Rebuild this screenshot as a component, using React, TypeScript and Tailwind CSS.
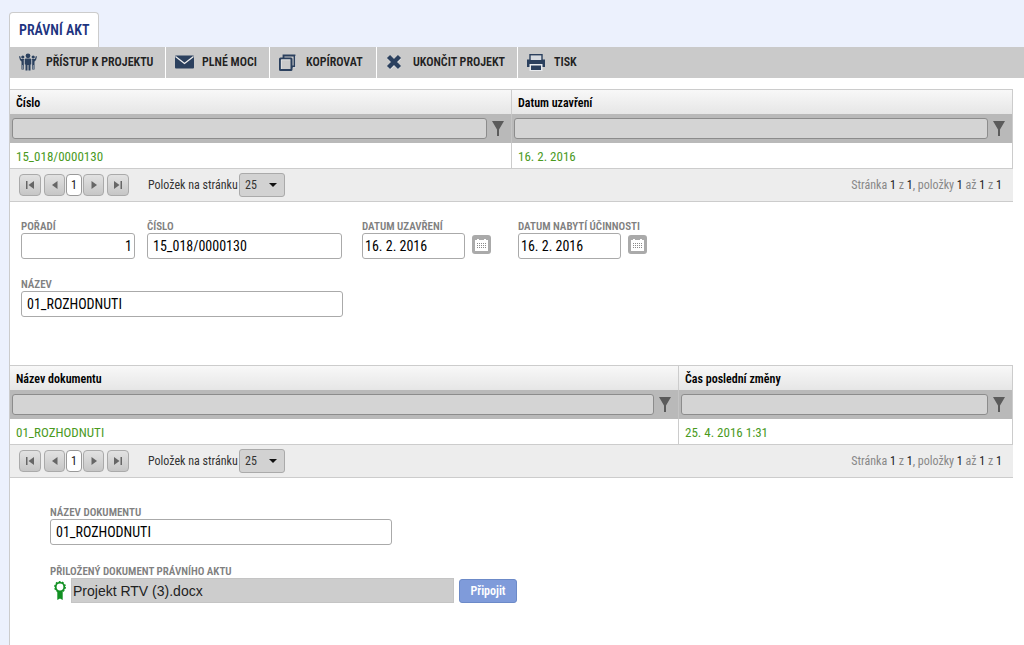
import { useState } from 'react'
import type { ReactNode } from 'react'

interface Column {
  title: string
  width: string
  value: string
}

const DOCUMENT_COLUMNS: Column[] = [
  { title: 'Název dokumentu', width: 'w-2/3', value: '01_ROZHODNUTI' },
  { title: 'Čas poslední změny', width: 'w-1/3', value: '25. 4. 2016 1:31' },
]

const ACT_COLUMNS: Column[] = [
  { title: 'Číslo', width: 'w-1/2', value: '15_018/0000130' },
  { title: 'Datum uzavření', width: 'w-1/2', value: '16. 2. 2016' },
]

function PeopleIcon() {
  return (
    <svg viewBox="0 0 18 18" className="w-[18px] h-[18px]" fill="#2b405e">
      <circle cx="9" cy="2.8" r="2.4" />
      <circle cx="3.8" cy="4" r="1.6" />
      <circle cx="14.2" cy="4" r="1.6" />
      <path d="M6.500 5.600h5l1 1V11.500h-1V17.500H9.500V12h-1V17.500H6.500V11.500h-1V6.600z" />
      <path d="M0 3.500 1.100 3 2 6H5v6.500H4.800V16.500H2.500V8.500L1 7z" />
      <path d="M18 3.500 16.900 3 16 6H13v6.500H13.200V16.500H15.500V8.500L17 7z" />
      <path d="M5.200 6.800V12M12.800 6.800V12M3.700 12V16M14.300 12V16" stroke="#dcdfe4" strokeWidth="0.600" />
    </svg>
  )
}

function MailIcon() {
  return (
    <svg viewBox="0 0 19 14" className="w-[19px] h-[14px]">
      <rect x="0" y="0.500" width="19" height="13" rx="1" fill="#2b405e" />
      <path d="M0.500 1.500 9.500 8.500 18.500 1.500" fill="none" stroke="#eee" strokeWidth="1.300" />
    </svg>
  )
}

function CopyIcon() {
  return (
    <svg viewBox="0 0 17 17" className="w-[17px] h-[17px]" fill="none">
      <path d="M4.500 4V1.500h11v11H13" stroke="#2b405e" strokeWidth="1.800" />
      <rect x="1" y="4.500" width="11.500" height="11.500" rx="0.500" stroke="#2b405e" strokeWidth="2" />
      <path d="M2.300 15V5.800h9M16.700 2v11.500H14" stroke="#eee" strokeWidth="0.700" />
    </svg>
  )
}

function CrossIcon() {
  return (
    <svg viewBox="0 0 16 16" className="w-4 h-4" fill="none">
      <path d="M3 3.500 13.500 14M13.500 3.500 3 14" stroke="#eee" strokeWidth="4.500" />
      <path d="M2.500 2.500 13.500 13.500M13.500 2.500 2.500 13.500" stroke="#2b405e" strokeWidth="4.400" />
    </svg>
  )
}

function PrinterIcon() {
  return (
    <svg viewBox="0 0 18 17" className="w-[18px] h-[17px]">
      <rect x="3" y="0.700" width="12" height="6" fill="#d6dae0" stroke="#2b405e" strokeWidth="1.400" />
      <path d="M0 5.500H3L4 7H14L15 5.500H18V13H15V10.500H3V13H0z" fill="#2b405e" />
      <rect x="2.500" y="10" width="13" height="7" fill="#e8eaed" />
      <rect x="4" y="11.500" width="10" height="4.500" fill="#2b405e" />
    </svg>
  )
}

function FunnelIcon() {
  return (
    <svg viewBox="0 0 12 15" className="w-3 h-[15px]" fill="#5b5b5b">
      <path d="M0 0h12L7 8.500V15H5V8.500z" />
    </svg>
  )
}

function CalendarIcon() {
  return (
    <svg viewBox="0 0 13 12" className="w-[13px] h-3">
      <path d="M0 1h2V0h2v1h5V0h2v1h2v11H0z" fill="#fff" />
      <path d="M2 4.500h9M2 6.500h9M2 8.500h9" stroke="#8a8a8a" strokeDasharray="1 1" />
    </svg>
  )
}

function RosetteIcon() {
  return (
    <svg viewBox="0 0 12 19" className="w-3 h-[19px]" fill="none">
      <circle cx="6" cy="6" r="4.300" stroke="#119022" strokeWidth="1.800" />
      <circle cx="6" cy="6" r="5.300" stroke="#119022" strokeWidth="1.200" strokeDasharray="1.800 1.500" />
      <path d="M3.300 10.500h5.400V19L6 17.500 3.300 19z" fill="#119022" />
    </svg>
  )
}

const ACTIONS = [
  { label: 'PŘÍSTUP K PROJEKTU', icon: <PeopleIcon />, width: 'w-[156px]' },
  { label: 'PLNÉ MOCI', icon: <MailIcon />, width: 'w-[104px]' },
  { label: 'KOPÍROVAT', icon: <CopyIcon />, width: 'w-[107px]' },
  { label: 'UKONČIT PROJEKT', icon: <CrossIcon />, width: 'w-[141px]' },
  { label: 'TISK', icon: <PrinterIcon />, width: 'w-[80px]' },
]

function PagerButton({ label, wide, children }: { label: string; wide?: boolean; children: ReactNode }) {
  return (
    <button
      type="button"
      aria-label={label}
      className={`h-[22px] flex items-center justify-center rounded-sm border border-[#aaa] bg-linear-to-b from-[#e2e2e2] to-[#c6c6c6] ${
        wide ? 'w-[22px]' : 'w-[21px]'
      }`}
    >
      <svg viewBox="0 0 8 8" className="w-2 h-2" fill="#666">
        {children}
      </svg>
    </button>
  )
}

function Pager({ id }: { id: string }) {
  const [size, setSize] = useState('25')

  return (
    <div className="h-[33px] flex items-center justify-between pl-[9px] pr-[11px] bg-[#ededed] border-b border-[#ccc] text-xs">
      <div className="flex items-center">
        <div className="flex items-center gap-px mr-[19px]">
          <PagerButton label="První stránka" wide>
            <path d="M0 0h1.500v8H0zM8 0v8L2.500 4z" />
          </PagerButton>
          <span className="w-px" />
          <PagerButton label="Předchozí stránka">
            <path d="M6.500 0v8L1 4z" />
          </PagerButton>
          <button type="button" className="w-4 h-[22px] rounded-sm border border-[#999] bg-white text-[#222]">
            1
          </button>
          <PagerButton label="Další stránka">
            <path d="M1.500 0v8L7 4z" />
          </PagerButton>
          <span className="w-px" />
          <PagerButton label="Poslední stránka" wide>
            <path d="M0 0v8l5.500-4zM6.500 0H8v8H6.500z" />
          </PagerButton>
        </div>
        <label htmlFor={id} className="w-[91px] text-[#333] whitespace-nowrap">
          Položek na stránku
        </label>
        <div className="relative">
          <select
            id={id}
            value={size}
            onChange={(e) => setSize(e.target.value)}
            className="block w-[46px] h-6 pl-[5px] appearance-none rounded-[3px] border border-[#aaa] bg-[#d2d2d2] text-[#333]"
          >
            <option>25</option>
            <option>50</option>
            <option>100</option>
          </select>
          <svg viewBox="0 0 8 4" className="absolute right-2 top-[10px] w-2 h-1 pointer-events-none" fill="#111">
            <path d="M0 0h8L4 4z" />
          </svg>
        </div>
      </div>
      <p className="text-[#888]">
        Stránka <span className="text-[#222]">1</span> z <span className="text-[#222]">1</span>, položky{' '}
        <span className="text-[#222]">1</span> až <span className="text-[#222]">1</span> z{' '}
        <span className="text-[#222]">1</span>
      </p>
    </div>
  )
}

function DataGrid({ id, columns }: { id: string; columns: Column[] }) {
  return (
    <div className="mr-[11px]">
      <table className="w-full table-fixed border-separate border-spacing-0 border-t border-r border-[#ccc] text-left">
        <thead>
          <tr className="bg-linear-to-b from-[#f8f8f8] to-[#e6e6e6]">
            {columns.map((c) => (
              <th key={c.title} className={`${c.width} h-6 px-[6px] pt-[2px] text-xs font-semibold text-black not-first:border-l border-[#ccc]`}>
                {c.title}
              </th>
            ))}
          </tr>
          <tr className="bg-[#b9b9b9]">
            {columns.map((c) => (
              <td key={c.title} className="h-[29px] pl-[2px] pr-[7px] not-first:border-l border-[#c4c4c4]">
                <div className="flex items-center gap-[5px]">
                  <input
                    type="text"
                    aria-label={`Filtr ${c.title}`}
                    className="flex-1 min-w-0 h-[21px] px-1 rounded-[3px] border border-[#8c8c8c] bg-[#d4d4d4] text-xs outline-none"
                  />
                  <button type="button" aria-label={`Filtrovat ${c.title}`}>
                    <FunnelIcon />
                  </button>
                </div>
              </td>
            ))}
          </tr>
        </thead>
        <tbody>
          <tr>
            {columns.map((c) => (
              <td key={c.title} className="h-[26px] px-[6px] pt-[2px] text-[13px] text-[#4a9a1e] border-b not-first:border-l border-[#ccc]">
                {c.value}
              </td>
            ))}
          </tr>
        </tbody>
      </table>
      <Pager id={id} />
    </div>
  )
}

interface FieldProps {
  id: string
  label: string
  value: string
  width: string
  inputClass?: string
  children?: ReactNode
}

function Field({ id, label, value, width, inputClass = 'px-[5px]', children }: FieldProps) {
  return (
    <div className={width}>
      <label htmlFor={id} className="block h-[13px] text-[11px] leading-[14px] font-semibold text-[#808080] whitespace-nowrap">
        {label}
      </label>
      <div className="flex items-start gap-[7px]">
        <input
          id={id}
          type="text"
          defaultValue={value}
          className={`flex-1 min-w-0 h-[26px] rounded-[3px] border border-[#aaa] bg-white text-sm text-black outline-none ${inputClass}`}
        />
        {children}
      </div>
    </div>
  )
}

function CalendarButton() {
  return (
    <button type="button" aria-label="Vybrat datum" className="w-[19px] h-[19px] mt-[2px] flex items-center justify-center rounded-[3px] bg-[#aaa]">
      <CalendarIcon />
    </button>
  )
}

export default function App() {
  return (
    <div className="min-h-screen flex flex-col bg-[#ecf1fd] pl-[9px] pt-3 font-['Roboto_Condensed','Liberation_Sans_Narrow',Roboto,sans-serif]">
      <nav className="flex">
        <a
          href="#akt"
          className="h-[35px] flex items-center px-[9px] rounded-t border border-b-0 border-[#ccc] bg-white text-sm font-semibold text-[#1d3480]"
        >
          PRÁVNÍ AKT
        </a>
      </nav>

      <main id="akt" className="flex-1 border-l border-[#ccc] bg-white">
        <div className="h-[31px] flex bg-[#cacaca]">
          {ACTIONS.map((a) => (
            <button
              key={a.label}
              type="button"
              className={`${a.width} flex items-center pl-[9px] pb-px border-r border-white last:border-0 text-xs font-semibold text-[#222] whitespace-nowrap`}
            >
              <span className="w-[27px] shrink-0 flex items-center">{a.icon}</span>
              {a.label}
            </button>
          ))}
        </div>

        <div className="pt-[11px]">
          <DataGrid id="act-size" columns={ACT_COLUMNS} />
        </div>

        <form className="flex flex-col gap-[19px] pl-[11px] pt-[18px] pb-12">
          <div className="flex flex-wrap">
            <Field id="poradi" label="POŘADÍ" value="1" width="w-[114px] mr-3" inputClass="px-[2px] text-right" />
            <Field id="cislo" label="ČÍSLO" value="15_018/0000130" width="w-[195px] mr-5" />
            <Field id="uzavreni" label="DATUM UZAVŘENÍ" value="16. 2. 2016" width="w-[129px] mr-[27px]" inputClass="px-[2px]">
              <CalendarButton />
            </Field>
            <Field id="ucinnost" label="DATUM NABYTÍ ÚČINNOSTI" value="16. 2. 2016" width="w-[129px]" inputClass="px-[2px]">
              <CalendarButton />
            </Field>
          </div>
          <Field id="nazev" label="NÁZEV" value="01_ROZHODNUTI" width="w-[322px]" />
        </form>

        <DataGrid id="doc-size" columns={DOCUMENT_COLUMNS} />

        <form className="flex flex-col gap-5 pl-10 pt-7 pb-10">
          <Field id="dokument" label="NÁZEV DOKUMENTU" value="01_ROZHODNUTI" width="w-[342px]" />
          <div>
            <label htmlFor="priloha" className="block h-[13px] text-[11px] leading-[14px] font-semibold text-[#808080]">
              PŘILOŽENÝ DOKUMENT PRÁVNÍHO AKTU
            </label>
            <div className="flex items-center pl-1">
              <RosetteIcon />
              <input
                id="priloha"
                type="text"
                readOnly
                value="Projekt RTV (3).docx"
                className="w-[383px] h-[25px] mx-[5px] px-px border border-[#c4c4c4] bg-[#cdcdcd] font-['Liberation_Sans',sans-serif] text-sm text-[#222] outline-none"
              />
              <button
                type="button"
                className="w-[58px] h-6 rounded-[3px] border border-[#6c8ac8] bg-[#7f9bda] text-xs font-semibold text-white"
              >
                Připojit
              </button>
            </div>
          </div>
        </form>
      </main>
    </div>
  )
}
